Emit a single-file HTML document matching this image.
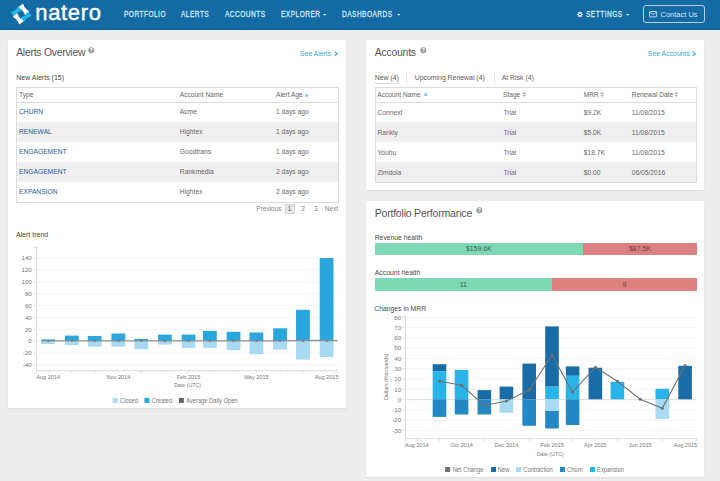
<!DOCTYPE html>
<html><head><meta charset="utf-8"><style>
html,body{margin:0;padding:0;}
body{width:720px;height:481px;overflow:hidden;position:relative;background:#ededed;font-family:"Liberation Sans",sans-serif;}
.t{position:absolute;white-space:nowrap;font-family:"Liberation Sans",sans-serif;}
svg{overflow:visible}
</style></head><body>
<div style="position:absolute;left:0px;top:0px;width:720px;height:30px;background:#146ba4;"></div>
<div style="position:absolute;left:0px;top:29px;width:720px;height:1px;background:#13609a;"></div>
<svg style="position:absolute;left:0;top:0" width="40" height="30" viewBox="0 0 40 30"><g transform="translate(21.1 14.1) rotate(-39)"><polygon points="-7.10,-7.70 -4.81,-7.70 -4.01,-7.10 0.21,-7.10 1.01,-7.70 3.30,-7.70 3.30,-2.70 1.01,-2.70 0.21,-3.30 -4.01,-3.30 -4.81,-2.70 -7.10,-2.70" fill="#23b6ea"/><polygon points="2.70,-7.10 2.70,-4.81 3.30,-4.01 3.30,0.21 2.70,1.01 2.70,3.30 7.70,3.30 7.70,1.01 7.10,0.21 7.10,-4.01 7.70,-4.81 7.70,-7.10" fill="#ffffff"/><polygon points="-3.30,2.70 -1.01,2.70 -0.21,3.30 4.01,3.30 4.81,2.70 7.10,2.70 7.10,7.70 4.81,7.70 4.01,7.10 -0.21,7.10 -1.01,7.70 -3.30,7.70" fill="#23b6ea"/><polygon points="-7.70,-3.30 -7.70,-1.01 -7.10,-0.21 -7.10,4.01 -7.70,4.81 -7.70,7.10 -2.70,7.10 -2.70,4.81 -3.30,4.01 -3.30,-0.21 -2.70,-1.01 -2.70,-3.30" fill="#ffffff"/></g></svg>
<div class="t" style="left:35.30px;top:2.45px;font-size:22px;line-height:22px;color:#fff;font-weight:normal;-webkit-text-stroke:0.4px #fff;letter-spacing:0.65px;">natero</div>
<div class="t" style="left:123.50px;top:10.20px;font-size:8.4px;line-height:8.4px;color:#d3e6f4;font-weight:normal;transform:scaleX(0.78);transform-origin:0 0;-webkit-text-stroke:0.3px #d3e6f4;letter-spacing:0.62px;">PORTFOLIO</div>
<div class="t" style="left:180.60px;top:10.20px;font-size:8.4px;line-height:8.4px;color:#d3e6f4;font-weight:normal;transform:scaleX(0.78);transform-origin:0 0;-webkit-text-stroke:0.3px #d3e6f4;letter-spacing:0.62px;">ALERTS</div>
<div class="t" style="left:224.80px;top:10.20px;font-size:8.4px;line-height:8.4px;color:#d3e6f4;font-weight:normal;transform:scaleX(0.78);transform-origin:0 0;-webkit-text-stroke:0.3px #d3e6f4;letter-spacing:0.62px;">ACCOUNTS</div>
<div class="t" style="left:281.10px;top:10.20px;font-size:8.4px;line-height:8.4px;color:#d3e6f4;font-weight:normal;transform:scaleX(0.78);transform-origin:0 0;-webkit-text-stroke:0.3px #d3e6f4;letter-spacing:0.62px;">EXPLORER</div>
<div class="t" style="left:342.30px;top:10.20px;font-size:8.4px;line-height:8.4px;color:#d3e6f4;font-weight:normal;transform:scaleX(0.78);transform-origin:0 0;-webkit-text-stroke:0.3px #d3e6f4;letter-spacing:0.62px;">DASHBOARDS</div>
<div class="t" style="left:585.80px;top:10.20px;font-size:8.4px;line-height:8.4px;color:#d3e6f4;font-weight:normal;transform:scaleX(0.78);transform-origin:0 0;-webkit-text-stroke:0.3px #d3e6f4;letter-spacing:0.62px;">SETTINGS</div>
<svg style="position:absolute;left:323.2px;top:14px" width="5" height="3"><polygon points="0,0 3.6,0 1.8,1.8" fill="#d3e6f4"/></svg>
<svg style="position:absolute;left:396.7px;top:14px" width="5" height="3"><polygon points="0,0 3.6,0 1.8,1.8" fill="#d3e6f4"/></svg>
<svg style="position:absolute;left:626px;top:14px" width="5" height="3"><polygon points="0,0 3.6,0 1.8,1.8" fill="#d3e6f4"/></svg>
<svg style="position:absolute;left:576px;top:11px" width="8" height="7" viewBox="0 0 8 7">
<g fill="#d3e6f4"><circle cx="3.95" cy="3.45" r="2.3"/>
<rect x="3.45" y="0.5" width="1" height="5.9"/><rect x="1" y="2.95" width="5.9" height="1"/>
<rect x="3.45" y="0.5" width="1" height="5.9" transform="rotate(45 3.95 3.45)"/><rect x="3.45" y="0.5" width="1" height="5.9" transform="rotate(-45 3.95 3.45)"/>
</g><circle cx="3.95" cy="3.45" r="0.85" fill="#146ba4"/></svg>
<div style="position:absolute;left:642.5px;top:4.8px;width:60.5px;height:16.5px;border:1px solid rgba(220,235,248,0.8);border-radius:3px;"></div>
<svg style="position:absolute;left:649px;top:10.6px" width="9" height="7" viewBox="0 0 9 7">
<rect x="0.5" y="0.5" width="7.2" height="5.4" rx="0.6" fill="none" stroke="#d3e6f4" stroke-width="0.85"/>
<polyline points="0.8,1.2 4.1,3.6 7.4,1.2" fill="none" stroke="#d3e6f4" stroke-width="0.85"/></svg>
<div class="t" style="left:660.50px;top:10.87px;font-size:7.5px;line-height:7.5px;color:#d3e6f4;font-weight:normal;">Contact Us</div>
<div style="position:absolute;left:8px;top:40px;width:338px;height:368px;background:#fff;box-shadow:0 1px 1.5px rgba(0,0,0,0.07);"></div>
<div style="position:absolute;left:366px;top:40px;width:338px;height:150px;background:#fff;box-shadow:0 1px 1.5px rgba(0,0,0,0.07);"></div>
<div style="position:absolute;left:366px;top:201px;width:338px;height:276px;background:#fff;box-shadow:0 1px 1.5px rgba(0,0,0,0.07);"></div>
<div class="t" style="left:16.20px;top:48.09px;font-size:10.4px;line-height:10.4px;color:#555;font-weight:normal;letter-spacing:-0.25px;">Alerts Overview</div>
<div class="t" style="left:299.80px;top:51.29px;font-size:6.9px;line-height:6.9px;color:#37a8dd;font-weight:normal;">See Alerts</div>
<div class="t" style="left:16.20px;top:73.80px;font-size:7.0px;line-height:7.0px;color:#474747;font-weight:normal;">New Alerts (15)</div>
<svg style="position:absolute;left:87.5px;top:47px" width="7" height="7" viewBox="0 0 7 7"><circle cx="3.3" cy="3.3" r="3" fill="#9a9a9a"/><text x="3.3" y="5.2" font-size="5" font-family="Liberation Sans" font-weight="bold" text-anchor="middle" fill="#fff">?</text></svg>
<svg style="position:absolute;left:333.8px;top:51.2px" width="5" height="6" viewBox="0 0 5 6"><polyline points="0.7,0.6 3.2,2.7 0.7,4.8" fill="none" stroke="#37a8dd" stroke-width="1.15"/></svg>
<div style="position:absolute;left:17px;top:122px;width:321px;height:20px;background:#efefef;"></div>
<div style="position:absolute;left:17px;top:162px;width:321px;height:20px;background:#efefef;"></div>
<div style="position:absolute;left:16px;top:87px;width:323px;height:1px;background:#dcdcdc;"></div>
<div style="position:absolute;left:16px;top:202px;width:323px;height:1px;background:#dcdcdc;"></div>
<div style="position:absolute;left:16px;top:87px;width:1px;height:116px;background:#dcdcdc;"></div>
<div style="position:absolute;left:338px;top:87px;width:1px;height:116px;background:#dcdcdc;"></div>
<div style="position:absolute;left:17px;top:102px;width:321px;height:1px;background:#dcdcdc;"></div>
<div class="t" style="left:19.00px;top:92.34px;font-size:6.6px;line-height:6.6px;color:#666;font-weight:normal;">Type</div>
<div class="t" style="left:179.80px;top:92.34px;font-size:6.6px;line-height:6.6px;color:#666;font-weight:normal;">Account Name</div>
<div class="t" style="left:276.00px;top:92.34px;font-size:6.6px;line-height:6.6px;color:#666;font-weight:normal;">Alert Age</div>
<div class="t" style="left:19.00px;top:109.46px;font-size:6.7px;line-height:6.7px;color:#255b91;font-weight:normal;">CHURN</div>
<div class="t" style="left:179.80px;top:109.46px;font-size:6.7px;line-height:6.7px;color:#666;font-weight:normal;">Acme</div>
<div class="t" style="left:276.00px;top:109.46px;font-size:6.7px;line-height:6.7px;color:#666;font-weight:normal;">1 days ago</div>
<div class="t" style="left:19.00px;top:129.46px;font-size:6.7px;line-height:6.7px;color:#255b91;font-weight:normal;">RENEWAL</div>
<div class="t" style="left:179.80px;top:129.46px;font-size:6.7px;line-height:6.7px;color:#666;font-weight:normal;">Hightex</div>
<div class="t" style="left:276.00px;top:129.46px;font-size:6.7px;line-height:6.7px;color:#666;font-weight:normal;">1 days ago</div>
<div class="t" style="left:19.00px;top:149.46px;font-size:6.7px;line-height:6.7px;color:#255b91;font-weight:normal;">ENGAGEMENT</div>
<div class="t" style="left:179.80px;top:149.46px;font-size:6.7px;line-height:6.7px;color:#666;font-weight:normal;">Goodtrans</div>
<div class="t" style="left:276.00px;top:149.46px;font-size:6.7px;line-height:6.7px;color:#666;font-weight:normal;">1 days ago</div>
<div class="t" style="left:19.00px;top:169.46px;font-size:6.7px;line-height:6.7px;color:#255b91;font-weight:normal;">ENGAGEMENT</div>
<div class="t" style="left:179.80px;top:169.46px;font-size:6.7px;line-height:6.7px;color:#666;font-weight:normal;">Rankmedia</div>
<div class="t" style="left:276.00px;top:169.46px;font-size:6.7px;line-height:6.7px;color:#666;font-weight:normal;">2 days ago</div>
<div class="t" style="left:19.00px;top:189.46px;font-size:6.7px;line-height:6.7px;color:#255b91;font-weight:normal;">EXPANSION</div>
<div class="t" style="left:179.80px;top:189.46px;font-size:6.7px;line-height:6.7px;color:#666;font-weight:normal;">Hightex</div>
<div class="t" style="left:276.00px;top:189.46px;font-size:6.7px;line-height:6.7px;color:#666;font-weight:normal;">2 days ago</div>
<svg style="position:absolute;left:305px;top:93.5px" width="4" height="3"><polygon points="0,2.5 3.5,2.5 1.75,0" fill="#37a8dd"/></svg>
<div class="t" style="left:256.30px;top:205.83px;font-size:6.5px;line-height:6.5px;color:#808080;font-weight:normal;">Previous</div>
<div style="position:absolute;left:284.5px;top:204px;width:10.5px;height:10px;background:#e8e8e8;border:1px solid #d4d4d4;box-sizing:border-box;"></div>
<div class="t" style="left:287.80px;top:205.83px;font-size:6.5px;line-height:6.5px;color:#555;font-weight:normal;">1</div>
<div class="t" style="left:301.20px;top:205.83px;font-size:6.5px;line-height:6.5px;color:#808080;font-weight:normal;">2</div>
<div class="t" style="left:314.00px;top:205.83px;font-size:6.5px;line-height:6.5px;color:#808080;font-weight:normal;">3</div>
<div class="t" style="left:324.80px;top:205.83px;font-size:6.5px;line-height:6.5px;color:#808080;font-weight:normal;">Next</div>
<div class="t" style="left:15.90px;top:231.00px;font-size:7.0px;line-height:7.0px;color:#474747;font-weight:normal;">Alert trend</div>
<div class="t" style="left:374.70px;top:48.09px;font-size:10.4px;line-height:10.4px;color:#555;font-weight:normal;letter-spacing:-0.2px;">Accounts</div>
<svg style="position:absolute;left:419.5px;top:47px" width="7" height="7" viewBox="0 0 7 7"><circle cx="3.3" cy="3.3" r="3" fill="#9a9a9a"/><text x="3.3" y="5.2" font-size="5" font-family="Liberation Sans" font-weight="bold" text-anchor="middle" fill="#fff">?</text></svg>
<div class="t" style="left:647.80px;top:51.29px;font-size:6.9px;line-height:6.9px;color:#37a8dd;font-weight:normal;">See Accounts</div>
<svg style="position:absolute;left:692.4px;top:51.2px" width="5" height="6" viewBox="0 0 5 6"><polyline points="0.7,0.6 3.2,2.7 0.7,4.8" fill="none" stroke="#37a8dd" stroke-width="1.15"/></svg>
<div class="t" style="left:374.70px;top:74.59px;font-size:6.9px;line-height:6.9px;color:#555;font-weight:normal;">New (4)</div>
<div style="position:absolute;left:374.5px;top:82.6px;width:24px;height:1px;background:#d8d8d8;"></div>
<div style="position:absolute;left:406px;top:72px;width:1px;height:12px;background:#ececec;"></div>
<div class="t" style="left:414.70px;top:74.59px;font-size:6.9px;line-height:6.9px;color:#5a5a5a;font-weight:normal;">Upcoming Renewal (4)</div>
<div style="position:absolute;left:494px;top:72px;width:1px;height:12px;background:#ececec;"></div>
<div class="t" style="left:501.70px;top:74.59px;font-size:6.9px;line-height:6.9px;color:#5a5a5a;font-weight:normal;">At Risk (4)</div>
<div style="position:absolute;left:376px;top:122px;width:320px;height:20px;background:#efefef;"></div>
<div style="position:absolute;left:376px;top:162px;width:320px;height:20px;background:#efefef;"></div>
<div style="position:absolute;left:375px;top:87px;width:322px;height:1px;background:#dcdcdc;"></div>
<div style="position:absolute;left:375px;top:182px;width:322px;height:1px;background:#dcdcdc;"></div>
<div style="position:absolute;left:375px;top:87px;width:1px;height:96px;background:#dcdcdc;"></div>
<div style="position:absolute;left:696px;top:87px;width:1px;height:96px;background:#dcdcdc;"></div>
<div style="position:absolute;left:376px;top:102px;width:320px;height:1px;background:#dcdcdc;"></div>
<div class="t" style="left:377.30px;top:92.34px;font-size:6.6px;line-height:6.6px;color:#666;font-weight:normal;">Account Name</div>
<div class="t" style="left:503.00px;top:92.34px;font-size:6.6px;line-height:6.6px;color:#666;font-weight:normal;">Stage</div>
<div class="t" style="left:583.70px;top:92.34px;font-size:6.6px;line-height:6.6px;color:#666;font-weight:normal;">MRR</div>
<div class="t" style="left:631.70px;top:92.34px;font-size:6.6px;line-height:6.6px;color:#666;font-weight:normal;">Renewal Date</div>
<div class="t" style="left:377.50px;top:109.56px;font-size:6.7px;line-height:6.7px;color:#666;font-weight:normal;">Connext</div>
<div class="t" style="left:503.50px;top:109.56px;font-size:6.7px;line-height:6.7px;color:#666;font-weight:normal;">Trial</div>
<div class="t" style="left:583.70px;top:109.56px;font-size:6.7px;line-height:6.7px;color:#666;font-weight:normal;">$9.2K</div>
<div class="t" style="left:631.70px;top:109.56px;font-size:6.7px;line-height:6.7px;color:#666;font-weight:normal;">11/08/2015</div>
<div class="t" style="left:377.50px;top:129.56px;font-size:6.7px;line-height:6.7px;color:#666;font-weight:normal;">Rankly</div>
<div class="t" style="left:503.50px;top:129.56px;font-size:6.7px;line-height:6.7px;color:#666;font-weight:normal;">Trial</div>
<div class="t" style="left:583.70px;top:129.56px;font-size:6.7px;line-height:6.7px;color:#666;font-weight:normal;">$5.0K</div>
<div class="t" style="left:631.70px;top:129.56px;font-size:6.7px;line-height:6.7px;color:#666;font-weight:normal;">11/08/2015</div>
<div class="t" style="left:377.50px;top:149.56px;font-size:6.7px;line-height:6.7px;color:#666;font-weight:normal;">Youhu</div>
<div class="t" style="left:503.50px;top:149.56px;font-size:6.7px;line-height:6.7px;color:#666;font-weight:normal;">Trial</div>
<div class="t" style="left:583.70px;top:149.56px;font-size:6.7px;line-height:6.7px;color:#666;font-weight:normal;">$18.7K</div>
<div class="t" style="left:631.70px;top:149.56px;font-size:6.7px;line-height:6.7px;color:#666;font-weight:normal;">11/08/2015</div>
<div class="t" style="left:377.50px;top:169.56px;font-size:6.7px;line-height:6.7px;color:#666;font-weight:normal;">Zimdola</div>
<div class="t" style="left:503.50px;top:169.56px;font-size:6.7px;line-height:6.7px;color:#666;font-weight:normal;">Trial</div>
<div class="t" style="left:583.70px;top:169.56px;font-size:6.7px;line-height:6.7px;color:#666;font-weight:normal;">$0.00</div>
<div class="t" style="left:631.70px;top:169.56px;font-size:6.7px;line-height:6.7px;color:#666;font-weight:normal;">06/05/2016</div>
<svg style="position:absolute;left:424px;top:93px" width="4" height="3"><polygon points="0,2.5 3.5,2.5 1.75,0" fill="#37a8dd"/></svg>
<svg style="position:absolute;left:522.0px;top:92.3px" width="6" height="6"><polygon points="0,2.1 4.4,2.1 2.2,0" fill="#b5b5b5"/><polygon points="0,2.8 4.4,2.8 2.2,4.9" fill="#b5b5b5"/></svg>
<svg style="position:absolute;left:600.2px;top:92.3px" width="6" height="6"><polygon points="0,2.1 4.4,2.1 2.2,0" fill="#b5b5b5"/><polygon points="0,2.8 4.4,2.8 2.2,4.9" fill="#b5b5b5"/></svg>
<svg style="position:absolute;left:674.0px;top:92.3px" width="6" height="6"><polygon points="0,2.1 4.4,2.1 2.2,0" fill="#b5b5b5"/><polygon points="0,2.8 4.4,2.8 2.2,4.9" fill="#b5b5b5"/></svg>
<div class="t" style="left:374.70px;top:207.80px;font-size:10.5px;line-height:10.5px;color:#555;font-weight:normal;letter-spacing:-0.2px;">Portfolio Performance</div>
<svg style="position:absolute;left:475.8px;top:207.2px" width="7" height="7" viewBox="0 0 7 7"><circle cx="3.3" cy="3.3" r="3" fill="#9a9a9a"/><text x="3.3" y="5.2" font-size="5" font-family="Liberation Sans" font-weight="bold" text-anchor="middle" fill="#fff">?</text></svg>
<div class="t" style="left:374.70px;top:235.17px;font-size:6.8px;line-height:6.8px;color:#474747;font-weight:normal;">Revenue health</div>
<div style="position:absolute;left:375px;top:242.8px;width:208px;height:12.4px;background:#7dd8b4;"></div>
<div style="position:absolute;left:583px;top:242.8px;width:114px;height:12.4px;background:#dc8080;"></div>
<div class="t" style="left:379.00px;width:200px;text-align:center;top:245.30px;font-size:7.0px;line-height:7.0px;color:#3f5f52;font-weight:normal;">$159.6K</div>
<div class="t" style="left:540.00px;width:200px;text-align:center;top:245.30px;font-size:7.0px;line-height:7.0px;color:#6a3a3a;font-weight:normal;">$87.5K</div>
<div class="t" style="left:374.70px;top:270.29px;font-size:6.9px;line-height:6.9px;color:#474747;font-weight:normal;">Account health</div>
<div style="position:absolute;left:375px;top:278.2px;width:177px;height:12.4px;background:#7dd8b4;"></div>
<div style="position:absolute;left:552px;top:278.2px;width:145px;height:12.4px;background:#dc8080;"></div>
<div class="t" style="left:363.30px;width:200px;text-align:center;top:280.50px;font-size:7.0px;line-height:7.0px;color:#3f5f52;font-weight:normal;">11</div>
<div class="t" style="left:524.50px;width:200px;text-align:center;top:280.50px;font-size:7.0px;line-height:7.0px;color:#6a3a3a;font-weight:normal;">9</div>
<div class="t" style="left:374.30px;top:305.67px;font-size:6.8px;line-height:6.8px;color:#474747;font-weight:normal;">Changes in MRR</div>
<svg style="position:absolute;left:0;top:0" width="720" height="481" viewBox="0 0 720 481" font-family="Liberation Sans"><line x1="36.50" y1="364.92" x2="337.70" y2="364.92" stroke="#f0f0f0" stroke-width="0.8"/><line x1="33.00" y1="364.92" x2="36.50" y2="364.92" stroke="#d8d8d8" stroke-width="0.8"/><text x="31.80" y="367.12" font-size="6.2" fill="#777" text-anchor="end" >-40</text><line x1="36.50" y1="353.06" x2="337.70" y2="353.06" stroke="#f0f0f0" stroke-width="0.8"/><line x1="33.00" y1="353.06" x2="36.50" y2="353.06" stroke="#d8d8d8" stroke-width="0.8"/><text x="31.80" y="355.26" font-size="6.2" fill="#777" text-anchor="end" >-20</text><line x1="36.50" y1="341.20" x2="337.70" y2="341.20" stroke="#f0f0f0" stroke-width="0.8"/><line x1="33.00" y1="341.20" x2="36.50" y2="341.20" stroke="#d8d8d8" stroke-width="0.8"/><text x="31.80" y="343.40" font-size="6.2" fill="#777" text-anchor="end" >0</text><line x1="36.50" y1="329.34" x2="337.70" y2="329.34" stroke="#f0f0f0" stroke-width="0.8"/><line x1="33.00" y1="329.34" x2="36.50" y2="329.34" stroke="#d8d8d8" stroke-width="0.8"/><text x="31.80" y="331.54" font-size="6.2" fill="#777" text-anchor="end" >20</text><line x1="36.50" y1="317.48" x2="337.70" y2="317.48" stroke="#f0f0f0" stroke-width="0.8"/><line x1="33.00" y1="317.48" x2="36.50" y2="317.48" stroke="#d8d8d8" stroke-width="0.8"/><text x="31.80" y="319.68" font-size="6.2" fill="#777" text-anchor="end" >40</text><line x1="36.50" y1="305.62" x2="337.70" y2="305.62" stroke="#f0f0f0" stroke-width="0.8"/><line x1="33.00" y1="305.62" x2="36.50" y2="305.62" stroke="#d8d8d8" stroke-width="0.8"/><text x="31.80" y="307.82" font-size="6.2" fill="#777" text-anchor="end" >60</text><line x1="36.50" y1="293.76" x2="337.70" y2="293.76" stroke="#f0f0f0" stroke-width="0.8"/><line x1="33.00" y1="293.76" x2="36.50" y2="293.76" stroke="#d8d8d8" stroke-width="0.8"/><text x="31.80" y="295.96" font-size="6.2" fill="#777" text-anchor="end" >80</text><line x1="36.50" y1="281.90" x2="337.70" y2="281.90" stroke="#f0f0f0" stroke-width="0.8"/><line x1="33.00" y1="281.90" x2="36.50" y2="281.90" stroke="#d8d8d8" stroke-width="0.8"/><text x="31.80" y="284.10" font-size="6.2" fill="#777" text-anchor="end" >100</text><line x1="36.50" y1="270.04" x2="337.70" y2="270.04" stroke="#f0f0f0" stroke-width="0.8"/><line x1="33.00" y1="270.04" x2="36.50" y2="270.04" stroke="#d8d8d8" stroke-width="0.8"/><text x="31.80" y="272.24" font-size="6.2" fill="#777" text-anchor="end" >120</text><line x1="36.50" y1="258.18" x2="337.70" y2="258.18" stroke="#f0f0f0" stroke-width="0.8"/><line x1="33.00" y1="258.18" x2="36.50" y2="258.18" stroke="#d8d8d8" stroke-width="0.8"/><text x="31.80" y="260.38" font-size="6.2" fill="#777" text-anchor="end" >140</text><line x1="36.50" y1="246.30" x2="36.50" y2="370.60" stroke="#d8d8d8" stroke-width="0.9"/><line x1="33.00" y1="247.30" x2="36.50" y2="247.30" stroke="#d8d8d8" stroke-width="0.8"/><line x1="36.50" y1="370.60" x2="337.70" y2="370.60" stroke="#d8d8d8" stroke-width="0.9"/><line x1="36.50" y1="370.60" x2="36.50" y2="373.30" stroke="#d8d8d8" stroke-width="0.8"/><line x1="48.20" y1="370.60" x2="48.20" y2="373.30" stroke="#d8d8d8" stroke-width="0.8"/><line x1="71.84" y1="370.60" x2="71.84" y2="373.30" stroke="#d8d8d8" stroke-width="0.8"/><line x1="94.72" y1="370.60" x2="94.72" y2="373.30" stroke="#d8d8d8" stroke-width="0.8"/><line x1="118.37" y1="370.60" x2="118.37" y2="373.30" stroke="#d8d8d8" stroke-width="0.8"/><line x1="141.25" y1="370.60" x2="141.25" y2="373.30" stroke="#d8d8d8" stroke-width="0.8"/><line x1="164.89" y1="370.60" x2="164.89" y2="373.30" stroke="#d8d8d8" stroke-width="0.8"/><line x1="188.54" y1="370.60" x2="188.54" y2="373.30" stroke="#d8d8d8" stroke-width="0.8"/><line x1="209.89" y1="370.60" x2="209.89" y2="373.30" stroke="#d8d8d8" stroke-width="0.8"/><line x1="233.54" y1="370.60" x2="233.54" y2="373.30" stroke="#d8d8d8" stroke-width="0.8"/><line x1="256.42" y1="370.60" x2="256.42" y2="373.30" stroke="#d8d8d8" stroke-width="0.8"/><line x1="280.06" y1="370.60" x2="280.06" y2="373.30" stroke="#d8d8d8" stroke-width="0.8"/><line x1="302.94" y1="370.60" x2="302.94" y2="373.30" stroke="#d8d8d8" stroke-width="0.8"/><line x1="326.59" y1="370.60" x2="326.59" y2="373.30" stroke="#d8d8d8" stroke-width="0.8"/><line x1="337.70" y1="370.60" x2="337.70" y2="373.30" stroke="#d8d8d8" stroke-width="0.8"/><rect x="41.30" y="339.40" width="13.80" height="1.80" fill="#2aa6df"/><rect x="41.30" y="341.20" width="13.80" height="2.80" fill="#a7daf2"/><rect x="64.94" y="335.60" width="13.80" height="5.60" fill="#2aa6df"/><rect x="64.94" y="341.20" width="13.80" height="3.80" fill="#a7daf2"/><rect x="87.82" y="336.00" width="13.80" height="5.20" fill="#2aa6df"/><rect x="87.82" y="341.20" width="13.80" height="5.50" fill="#a7daf2"/><rect x="111.47" y="333.50" width="13.80" height="7.70" fill="#2aa6df"/><rect x="111.47" y="341.20" width="13.80" height="5.50" fill="#a7daf2"/><rect x="134.35" y="339.00" width="13.80" height="2.20" fill="#2aa6df"/><rect x="134.35" y="341.20" width="13.80" height="8.00" fill="#a7daf2"/><rect x="157.99" y="334.60" width="13.80" height="6.60" fill="#2aa6df"/><rect x="157.99" y="341.20" width="13.80" height="3.40" fill="#a7daf2"/><rect x="181.64" y="334.60" width="13.80" height="6.60" fill="#2aa6df"/><rect x="181.64" y="341.20" width="13.80" height="6.70" fill="#a7daf2"/><rect x="202.99" y="330.90" width="13.80" height="10.30" fill="#2aa6df"/><rect x="202.99" y="341.20" width="13.80" height="6.70" fill="#a7daf2"/><rect x="226.64" y="331.80" width="13.80" height="9.40" fill="#2aa6df"/><rect x="226.64" y="341.20" width="13.80" height="9.00" fill="#a7daf2"/><rect x="249.52" y="332.50" width="13.80" height="8.70" fill="#2aa6df"/><rect x="249.52" y="341.20" width="13.80" height="13.00" fill="#a7daf2"/><rect x="273.16" y="328.30" width="13.80" height="12.90" fill="#2aa6df"/><rect x="273.16" y="341.20" width="13.80" height="8.30" fill="#a7daf2"/><rect x="296.04" y="309.80" width="13.80" height="31.40" fill="#2aa6df"/><rect x="296.04" y="341.20" width="13.80" height="18.40" fill="#a7daf2"/><rect x="319.69" y="258.00" width="13.80" height="83.20" fill="#2aa6df"/><rect x="319.69" y="341.20" width="13.80" height="15.80" fill="#a7daf2"/><polyline points="41.3,340.9 48.2,340.9 71.8,340.9 94.7,340.9 118.4,340.9 141.2,340.9 164.9,340.9 188.5,340.9 209.9,340.9 233.5,340.9 256.4,340.9 280.1,340.9 302.9,340.5 326.6,340.5 337.7,340.6" fill="none" stroke="#8e8e8e" stroke-width="1.3"/><circle cx="48.2" cy="340.9" r="1.0" fill="#7a7a7a"/><circle cx="71.8" cy="340.9" r="1.0" fill="#7a7a7a"/><circle cx="94.7" cy="340.9" r="1.0" fill="#7a7a7a"/><circle cx="118.4" cy="340.9" r="1.0" fill="#7a7a7a"/><circle cx="141.2" cy="340.9" r="1.0" fill="#7a7a7a"/><circle cx="164.9" cy="340.9" r="1.0" fill="#7a7a7a"/><circle cx="188.5" cy="340.9" r="1.0" fill="#7a7a7a"/><circle cx="209.9" cy="340.9" r="1.0" fill="#7a7a7a"/><circle cx="233.5" cy="340.9" r="1.0" fill="#7a7a7a"/><circle cx="256.4" cy="340.9" r="1.0" fill="#7a7a7a"/><circle cx="280.1" cy="340.9" r="1.0" fill="#7a7a7a"/><circle cx="302.9" cy="340.9" r="1.0" fill="#7a7a7a"/><circle cx="326.6" cy="340.9" r="1.0" fill="#7a7a7a"/><text transform="translate(48.20 378.90) scale(0.9 1)" x="0" y="0" font-size="6.2" fill="#777" text-anchor="middle" >Aug 2014</text><text transform="translate(118.37 378.90) scale(0.9 1)" x="0" y="0" font-size="6.2" fill="#777" text-anchor="middle" >Nov 2014</text><text transform="translate(188.54 378.90) scale(0.9 1)" x="0" y="0" font-size="6.2" fill="#777" text-anchor="middle" >Feb 2015</text><text transform="translate(256.42 378.90) scale(0.9 1)" x="0" y="0" font-size="6.2" fill="#777" text-anchor="middle" >May 2015</text><text transform="translate(326.59 378.90) scale(0.9 1)" x="0" y="0" font-size="6.2" fill="#777" text-anchor="middle" >Aug 2015</text><text transform="translate(187.50 387.30) scale(0.9 1)" x="0" y="0" font-size="5.9" fill="#777" text-anchor="middle" >Date (UTC)</text><rect x="112.70" y="397.90" width="5.00" height="5.00" fill="#a7daf2"/><text transform="translate(120.00 402.90) scale(0.9 1)" x="0" y="0" font-size="6.4" fill="#777" text-anchor="start" >Closed</text><rect x="144.40" y="397.90" width="5.00" height="5.00" fill="#2aa6df"/><text transform="translate(151.80 402.90) scale(0.9 1)" x="0" y="0" font-size="6.4" fill="#777" text-anchor="start" >Created</text><rect x="178.90" y="397.90" width="5.00" height="5.00" fill="#666"/><text transform="translate(186.20 402.90) scale(0.9 1)" x="0" y="0" font-size="6.4" fill="#777" text-anchor="start" >Average Daily Open</text><line x1="405.50" y1="430.44" x2="696.50" y2="430.44" stroke="#f0f0f0" stroke-width="0.8"/><line x1="402.30" y1="430.44" x2="405.50" y2="430.44" stroke="#d8d8d8" stroke-width="0.8"/><text x="401.20" y="432.64" font-size="6.2" fill="#777" text-anchor="end" >-30</text><line x1="405.50" y1="420.16" x2="696.50" y2="420.16" stroke="#f0f0f0" stroke-width="0.8"/><line x1="402.30" y1="420.16" x2="405.50" y2="420.16" stroke="#d8d8d8" stroke-width="0.8"/><text x="401.20" y="422.36" font-size="6.2" fill="#777" text-anchor="end" >-20</text><line x1="405.50" y1="409.88" x2="696.50" y2="409.88" stroke="#f0f0f0" stroke-width="0.8"/><line x1="402.30" y1="409.88" x2="405.50" y2="409.88" stroke="#d8d8d8" stroke-width="0.8"/><text x="401.20" y="412.08" font-size="6.2" fill="#777" text-anchor="end" >-10</text><line x1="405.50" y1="399.60" x2="696.50" y2="399.60" stroke="#f0f0f0" stroke-width="0.8"/><line x1="402.30" y1="399.60" x2="405.50" y2="399.60" stroke="#d8d8d8" stroke-width="0.8"/><text x="401.20" y="401.80" font-size="6.2" fill="#777" text-anchor="end" >0</text><line x1="405.50" y1="389.32" x2="696.50" y2="389.32" stroke="#f0f0f0" stroke-width="0.8"/><line x1="402.30" y1="389.32" x2="405.50" y2="389.32" stroke="#d8d8d8" stroke-width="0.8"/><text x="401.20" y="391.52" font-size="6.2" fill="#777" text-anchor="end" >10</text><line x1="405.50" y1="379.04" x2="696.50" y2="379.04" stroke="#f0f0f0" stroke-width="0.8"/><line x1="402.30" y1="379.04" x2="405.50" y2="379.04" stroke="#d8d8d8" stroke-width="0.8"/><text x="401.20" y="381.24" font-size="6.2" fill="#777" text-anchor="end" >20</text><line x1="405.50" y1="368.76" x2="696.50" y2="368.76" stroke="#f0f0f0" stroke-width="0.8"/><line x1="402.30" y1="368.76" x2="405.50" y2="368.76" stroke="#d8d8d8" stroke-width="0.8"/><text x="401.20" y="370.96" font-size="6.2" fill="#777" text-anchor="end" >30</text><line x1="405.50" y1="358.48" x2="696.50" y2="358.48" stroke="#f0f0f0" stroke-width="0.8"/><line x1="402.30" y1="358.48" x2="405.50" y2="358.48" stroke="#d8d8d8" stroke-width="0.8"/><text x="401.20" y="360.68" font-size="6.2" fill="#777" text-anchor="end" >40</text><line x1="405.50" y1="348.20" x2="696.50" y2="348.20" stroke="#f0f0f0" stroke-width="0.8"/><line x1="402.30" y1="348.20" x2="405.50" y2="348.20" stroke="#d8d8d8" stroke-width="0.8"/><text x="401.20" y="350.40" font-size="6.2" fill="#777" text-anchor="end" >50</text><line x1="405.50" y1="337.92" x2="696.50" y2="337.92" stroke="#f0f0f0" stroke-width="0.8"/><line x1="402.30" y1="337.92" x2="405.50" y2="337.92" stroke="#d8d8d8" stroke-width="0.8"/><text x="401.20" y="340.12" font-size="6.2" fill="#777" text-anchor="end" >60</text><line x1="405.50" y1="327.64" x2="696.50" y2="327.64" stroke="#f0f0f0" stroke-width="0.8"/><line x1="402.30" y1="327.64" x2="405.50" y2="327.64" stroke="#d8d8d8" stroke-width="0.8"/><text x="401.20" y="329.84" font-size="6.2" fill="#777" text-anchor="end" >70</text><line x1="405.50" y1="317.36" x2="696.50" y2="317.36" stroke="#f0f0f0" stroke-width="0.8"/><line x1="402.30" y1="317.36" x2="405.50" y2="317.36" stroke="#d8d8d8" stroke-width="0.8"/><text x="401.20" y="319.56" font-size="6.2" fill="#777" text-anchor="end" >80</text><line x1="405.50" y1="315.80" x2="405.50" y2="438.60" stroke="#d8d8d8" stroke-width="0.9"/><line x1="402.30" y1="316.00" x2="405.50" y2="316.00" stroke="#d8d8d8" stroke-width="0.8"/><line x1="405.50" y1="438.60" x2="696.50" y2="438.60" stroke="#d8d8d8" stroke-width="0.9"/><line x1="405.50" y1="399.60" x2="696.50" y2="399.60" stroke="#dedede" stroke-width="0.9"/><line x1="405.50" y1="438.60" x2="405.50" y2="441.30" stroke="#d8d8d8" stroke-width="0.8"/><line x1="416.70" y1="438.60" x2="416.70" y2="441.30" stroke="#d8d8d8" stroke-width="0.8"/><line x1="439.49" y1="438.60" x2="439.49" y2="441.30" stroke="#d8d8d8" stroke-width="0.8"/><line x1="461.55" y1="438.60" x2="461.55" y2="441.30" stroke="#d8d8d8" stroke-width="0.8"/><line x1="484.35" y1="438.60" x2="484.35" y2="441.30" stroke="#d8d8d8" stroke-width="0.8"/><line x1="506.41" y1="438.60" x2="506.41" y2="441.30" stroke="#d8d8d8" stroke-width="0.8"/><line x1="529.20" y1="438.60" x2="529.20" y2="441.30" stroke="#d8d8d8" stroke-width="0.8"/><line x1="552.00" y1="438.60" x2="552.00" y2="441.30" stroke="#d8d8d8" stroke-width="0.8"/><line x1="572.58" y1="438.60" x2="572.58" y2="441.30" stroke="#d8d8d8" stroke-width="0.8"/><line x1="595.38" y1="438.60" x2="595.38" y2="441.30" stroke="#d8d8d8" stroke-width="0.8"/><line x1="617.44" y1="438.60" x2="617.44" y2="441.30" stroke="#d8d8d8" stroke-width="0.8"/><line x1="640.23" y1="438.60" x2="640.23" y2="441.30" stroke="#d8d8d8" stroke-width="0.8"/><line x1="662.29" y1="438.60" x2="662.29" y2="441.30" stroke="#d8d8d8" stroke-width="0.8"/><line x1="685.08" y1="438.60" x2="685.08" y2="441.30" stroke="#d8d8d8" stroke-width="0.8"/><line x1="696.50" y1="438.60" x2="696.50" y2="441.30" stroke="#d8d8d8" stroke-width="0.8"/><rect x="432.69" y="364.20" width="13.60" height="7.00" fill="#1a6ca7"/><rect x="432.69" y="371.20" width="13.60" height="28.10" fill="#28b4e8"/><rect x="432.69" y="399.30" width="13.60" height="17.60" fill="#2488c5"/><rect x="454.75" y="369.90" width="13.60" height="29.40" fill="#28b4e8"/><rect x="454.75" y="399.30" width="13.60" height="15.20" fill="#2488c5"/><rect x="477.55" y="390.10" width="13.60" height="9.20" fill="#1a6ca7"/><rect x="477.55" y="399.30" width="13.60" height="15.20" fill="#2488c5"/><rect x="499.61" y="386.60" width="13.60" height="12.70" fill="#1a6ca7"/><rect x="499.61" y="399.30" width="13.60" height="13.50" fill="#a8daf1"/><rect x="522.40" y="363.60" width="13.60" height="35.70" fill="#1a6ca7"/><rect x="522.40" y="399.30" width="13.60" height="26.50" fill="#2488c5"/><rect x="545.20" y="326.40" width="13.60" height="60.20" fill="#1a6ca7"/><rect x="545.20" y="386.60" width="13.60" height="12.70" fill="#28b4e8"/><rect x="545.20" y="399.30" width="13.60" height="11.70" fill="#a8daf1"/><rect x="545.20" y="411.00" width="13.60" height="17.50" fill="#2488c5"/><rect x="565.78" y="366.40" width="13.60" height="9.40" fill="#1a6ca7"/><rect x="565.78" y="375.80" width="13.60" height="23.50" fill="#28b4e8"/><rect x="565.78" y="399.30" width="13.60" height="25.70" fill="#2488c5"/><rect x="588.58" y="367.70" width="13.60" height="31.60" fill="#1a6ca7"/><rect x="610.64" y="381.80" width="13.60" height="17.50" fill="#28b4e8"/><rect x="655.49" y="388.80" width="13.60" height="10.50" fill="#28b4e8"/><rect x="655.49" y="399.30" width="13.60" height="19.70" fill="#a8daf1"/><rect x="678.28" y="365.80" width="13.60" height="33.50" fill="#1a6ca7"/><polyline points="439.5,381.2 461.6,385.3 484.3,405.5 506.4,401.0 529.2,390.1 552.0,355.0 572.6,392.0 595.4,367.2 617.4,381.2 640.2,399.3 662.3,408.2 685.1,365.5" fill="none" stroke="#707070" stroke-width="1.1"/><circle cx="439.5" cy="381.2" r="1.5" fill="#707070"/><circle cx="461.6" cy="385.3" r="1.5" fill="#707070"/><circle cx="484.3" cy="405.5" r="1.5" fill="#707070"/><circle cx="506.4" cy="401.0" r="1.5" fill="#707070"/><circle cx="529.2" cy="390.1" r="1.5" fill="#707070"/><circle cx="552.0" cy="355.0" r="1.5" fill="#707070"/><circle cx="572.6" cy="392.0" r="1.5" fill="#707070"/><circle cx="595.4" cy="367.2" r="1.5" fill="#707070"/><circle cx="617.4" cy="381.2" r="1.5" fill="#707070"/><circle cx="640.2" cy="399.3" r="1.5" fill="#707070"/><circle cx="662.3" cy="408.2" r="1.5" fill="#707070"/><circle cx="685.1" cy="365.5" r="1.5" fill="#707070"/><text transform="translate(416.70 447.40) scale(0.9 1)" x="0" y="0" font-size="6.2" fill="#777" text-anchor="middle" >Aug 2014</text><text transform="translate(461.55 447.40) scale(0.9 1)" x="0" y="0" font-size="6.2" fill="#777" text-anchor="middle" >Oct 2014</text><text transform="translate(506.41 447.40) scale(0.9 1)" x="0" y="0" font-size="6.2" fill="#777" text-anchor="middle" >Dec 2014</text><text transform="translate(552.00 447.40) scale(0.9 1)" x="0" y="0" font-size="6.2" fill="#777" text-anchor="middle" >Feb 2015</text><text transform="translate(595.38 447.40) scale(0.9 1)" x="0" y="0" font-size="6.2" fill="#777" text-anchor="middle" >Apr 2015</text><text transform="translate(640.23 447.40) scale(0.9 1)" x="0" y="0" font-size="6.2" fill="#777" text-anchor="middle" >Jun 2015</text><text transform="translate(697.20 447.40) scale(0.9 1)" x="0" y="0" font-size="6.2" fill="#777" text-anchor="end" >Aug 2015</text><text transform="translate(550.20 455.80) scale(0.9 1)" x="0" y="0" font-size="5.9" fill="#777" text-anchor="middle" >Date (UTC)</text><text x="388.20" y="376.70" font-size="5.4" fill="#777" text-anchor="middle" transform="rotate(-90 388.2 376.7)">Dollars (thousands)</text><rect x="445.10" y="467.00" width="5.00" height="5.00" fill="#707070"/><text transform="translate(452.70 471.90) scale(0.9 1)" x="0" y="0" font-size="6.4" fill="#777" text-anchor="start" >Net Change</text><rect x="491.10" y="467.00" width="5.00" height="5.00" fill="#1a6ca7"/><text transform="translate(497.80 471.90) scale(0.9 1)" x="0" y="0" font-size="6.4" fill="#777" text-anchor="start" >New</text><rect x="516.00" y="467.00" width="5.00" height="5.00" fill="#a8daf1"/><text transform="translate(523.30 471.90) scale(0.9 1)" x="0" y="0" font-size="6.4" fill="#777" text-anchor="start" >Contraction</text><rect x="560.00" y="467.00" width="5.00" height="5.00" fill="#2488c5"/><text transform="translate(567.10 471.90) scale(0.9 1)" x="0" y="0" font-size="6.4" fill="#777" text-anchor="start" >Churn</text><rect x="590.00" y="467.00" width="5.00" height="5.00" fill="#28b4e8"/><text transform="translate(597.10 471.90) scale(0.9 1)" x="0" y="0" font-size="6.4" fill="#777" text-anchor="start" >Expansion</text></svg>
</body></html>
